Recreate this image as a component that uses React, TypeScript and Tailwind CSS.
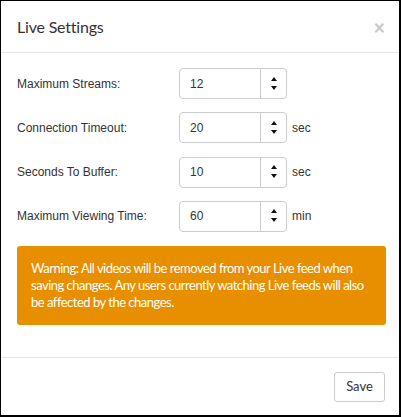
import React from "react";

const Spin = () => (
  <div className="w-[26px] h-full border-l border-[#cccccc] flex flex-col items-center justify-center gap-[5px] pb-[1px]">
    <svg width="6" height="4" viewBox="0 0 6 4"><path d="M3 0L6 4H0z" fill="#111" /></svg>
    <svg width="6" height="4" viewBox="0 0 6 4"><path d="M0 0H6L3 4z" fill="#111" /></svg>
  </div>
);

const Row = ({ label, value, unit }: { label: string; value: string; unit?: string }) => (
  <div className="flex items-center h-[31px]">
    <div className="w-[162px] text-[12px] text-[#333333]" style={{ fontFamily: '"Liberation Sans", Arial, sans-serif' }}>{label}</div>
    <div className="w-[108px] h-[31px] border border-[#cccccc] rounded-[4px] flex items-stretch bg-white">
      <div className="flex-1 flex items-center pl-[10px] text-[12px] text-[#333333]" style={{ fontFamily: '"Liberation Sans", Arial, sans-serif' }}>{value}</div>
      <Spin />
    </div>
    {unit && (
      <div className="ml-[5px] text-[12px] text-[#333333]" style={{ fontFamily: '"Liberation Sans", Arial, sans-serif' }}>{unit}</div>
    )}
  </div>
);

export default function App() {
  return (
    <div className="w-[401px] h-[417px] bg-white border-l border-t border-r-2 border-b-2 border-black flex flex-col" style={{ fontFamily: 'Lato, "Open Sans", sans-serif' }}>
      <div className="h-[52px] border-b border-[#e5e5e5] flex items-center justify-between pl-[16px] pr-[14px]">
        <div className="text-[16px] tracking-[-0.2px] text-[#333333] leading-none">Live Settings</div>
        <div className="text-[20px] font-bold text-[#c8c8c8] leading-none">×</div>
      </div>
      <div className="flex-1 px-[16px] pt-[15px]">
        <div className="flex flex-col gap-[13.33px]">
          <Row label="Maximum Streams:" value="12" />
          <Row label="Connection Timeout:" value="20" unit="sec" />
          <Row label="Seconds To Buffer:" value="10" unit="sec" />
          <Row label="Maximum Viewing Time:" value="60" unit="min" />
        </div>
        <div className="mt-[14px] w-[369px] h-[79px] bg-[#e88f00] rounded-[3px] px-[14px] pt-[14px] text-white text-[13px] tracking-[-0.5px] leading-[17px]">
          Warning: All videos will be removed from your Live feed when saving changes. Any users currently watching Live feeds will also be affected by the changes.
        </div>
      </div>
      <div className="border-t border-[#e5e5e5] h-[58px] flex items-center justify-end pr-[14px]">
        <button className="w-[51px] h-[30px] border border-[#cccccc] rounded-[3px] bg-white text-[13px] text-[#333333]">Save</button>
      </div>
    </div>
  );
}
